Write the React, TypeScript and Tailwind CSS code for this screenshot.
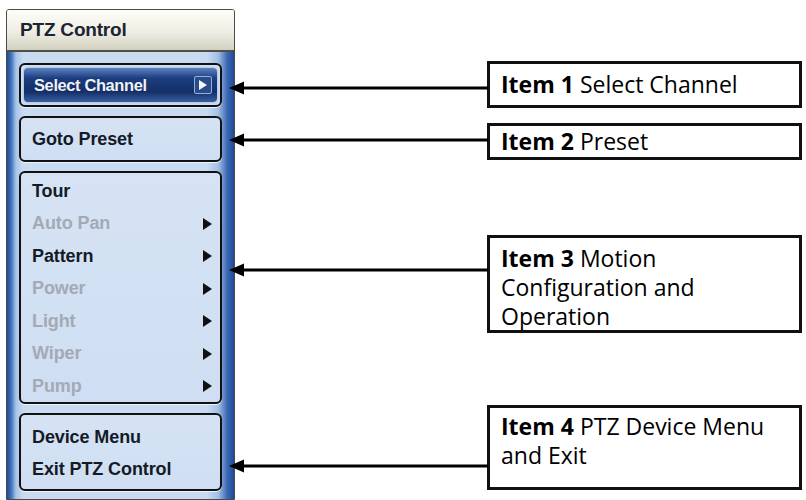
import { ReactNode } from "react";

const menuFont = { fontFamily: '"Liberation Sans", Arial, sans-serif' };
const labelFont = { fontFamily: '"Open Sans", "Liberation Sans", sans-serif' };

function Arrow() {
  return (
    <svg width="10" height="12" viewBox="0 0 10 12" className="shrink-0">
      <path d="M1 0 L10 6 L1 12 Z" fill="#111" />
    </svg>
  );
}

function MenuRow({ label, disabled, arrow }: { label: string; disabled?: boolean; arrow?: boolean }) {
  return (
    <div className="h-[32.5px] flex items-center justify-between pl-[11px] pr-[8px]">
      <span
        className={
          "text-[18px] font-bold tracking-[-0.1px] " +
          (disabled ? "text-[#a3aab5]" : "text-[#141a26]")
        }
      >
        {label}
      </span>
      {arrow && <Arrow />}
    </div>
  );
}

function Group({ children, className }: { children: ReactNode; className: string }) {
  return (
    <div
      className={
        "rounded-[6px] border-2 border-[#111] bg-[linear-gradient(180deg,#d5e3f4,#cfdef2)] shadow-[0_1px_0_#eef4fb] " +
        className
      }
    >
      {children}
    </div>
  );
}

function LabelBox({ num, children, className }: { num: number; children: ReactNode; className: string }) {
  return (
    <div
      className={"border-[3px] border-[#111] bg-white px-[11px] text-[23px] leading-[29px] text-black " + className}
      style={labelFont}
    >
      <div>
        <span className="font-bold">Item {num}</span> {children}
      </div>
    </div>
  );
}

export default function App() {
  return (
    <div className="relative w-[806px] h-[500px] bg-white overflow-hidden flex">
      {/* PTZ panel */}
      <div
        className="ml-[6px] mt-[9px] w-[229px] h-[491px] flex flex-col border border-[#4a4a4a] rounded-t-[3px] overflow-hidden"
        style={menuFont}
      >
        <div className="h-[42px] shrink-0 flex items-center px-[13px] bg-[linear-gradient(180deg,#fdfdf7,#eeeee4_55%,#d2d0bf)] border-b-2 border-[#4f4f48]">
          <span className="text-[19px] font-bold text-[#1c2333] tracking-[-0.2px]">PTZ Control</span>
        </div>
        <div className="flex-1 flex flex-col gap-[9px] px-[12px] pt-[11px] bg-[linear-gradient(90deg,#1f4b98_0px,#3f6fb8_4px,#a9c4e8_9px,#c8dbf1_16px,#c8dbf1_88%,#a4c0e6_93%,#3b69b3_97%,#1f4b98_100%)]">
          {/* Item 1 */}
          <Group className="h-[44px] p-[3px]">
            <div className="h-full rounded-[4px] bg-[linear-gradient(180deg,#5d82c0,#1c3d7f_30%,#152f68_70%,#3a5f9f)] flex items-center justify-between pl-[10px] pr-[5px] shadow-[0_0_3px_#7fa4d8]">
              <span className="text-[16.5px] font-bold text-[#eef3fb] tracking-[-0.4px] [text-shadow:0_0_1px_#0b1a3a]">
                Select Channel
              </span>
              <div className="w-[18px] h-[18px] rounded-[2px] bg-[#2a4a8a] border border-[#8fb0e0] flex items-center justify-center">
                <svg width="8" height="10" viewBox="0 0 8 10">
                  <path d="M0 0 L8 5 L0 10 Z" fill="#f4f7fc" />
                </svg>
              </div>
            </div>
          </Group>
          {/* Item 2 */}
          <Group className="h-[46px] pt-[5px]">
            <MenuRow label="Goto Preset" />
          </Group>
          {/* Item 3 */}
          <Group className="h-[233px] pt-[2px]">
            <MenuRow label="Tour" />
            <MenuRow label="Auto Pan" disabled arrow />
            <MenuRow label="Pattern" arrow />
            <MenuRow label="Power" disabled arrow />
            <MenuRow label="Light" disabled arrow />
            <MenuRow label="Wiper" disabled arrow />
            <MenuRow label="Pump" disabled arrow />
          </Group>
          {/* Item 4 */}
          <Group className="h-[78px] pt-[6px]">
            <MenuRow label="Device Menu" />
            <MenuRow label="Exit PTZ Control" />
          </Group>
        </div>
      </div>

      {/* Label boxes */}
      <div className="ml-[252px] w-[315px] flex flex-col">
        <LabelBox num={1} className="mt-[61px] h-[47px] flex items-center">
          Select Channel
        </LabelBox>
        <LabelBox num={2} className="mt-[15px] h-[37px] flex items-center">
          Preset
        </LabelBox>
        <LabelBox num={3} className="mt-[75px] h-[98px] pt-[6px]">
          Motion
          <br />
          Configuration and
          <br />
          Operation
        </LabelBox>
        <LabelBox num={4} className="mt-[72px] h-[85px] pt-[4px]">
          PTZ Device Menu
          <br />
          and Exit
        </LabelBox>
      </div>

      {/* connector arrows */}
      <svg className="absolute left-0 top-0 pointer-events-none" width="806" height="500">
        {[88, 140, 270, 466].map((y) => (
          <g key={y}>
            <line x1="242" y1={y} x2="488" y2={y} stroke="#000" strokeWidth="3" />
            <path d={`M229 ${y} L244 ${y - 6.5} L244 ${y + 6.5} Z`} fill="#000" />
          </g>
        ))}
      </svg>
    </div>
  );
}
